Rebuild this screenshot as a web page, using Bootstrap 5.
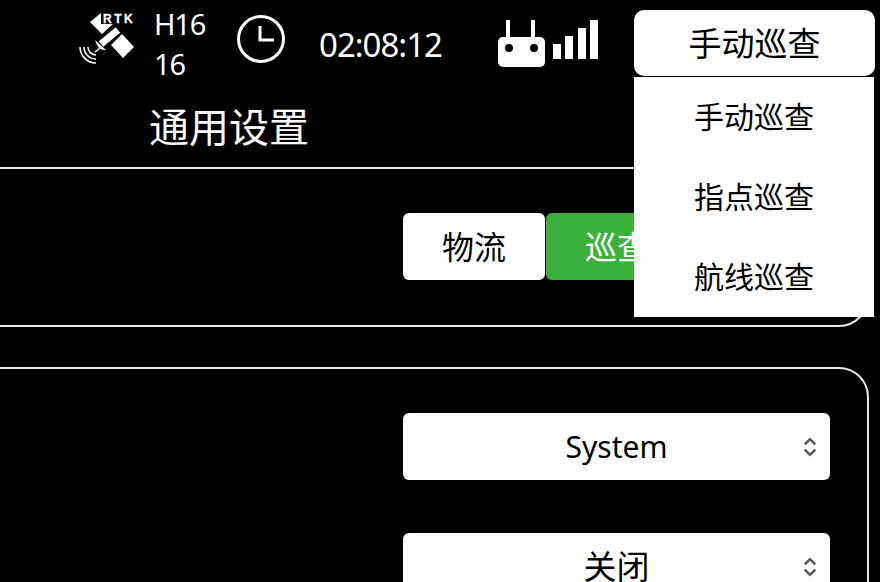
<!DOCTYPE html>
<html lang="zh-CN">
<head>
  <meta charset="UTF-8" />
  <meta name="viewport" content="width=device-width, initial-scale=1.0" />
  <title>通用设置</title>
  <link href="https://cdn.jsdelivr.net/npm/bootstrap@5.3.0/dist/css/bootstrap.min.css" rel="stylesheet" />
  <style>
    html, body {
      height: 100%;
      overflow: hidden;
    }
    body {
      background-color: #000;
      color: #fff;
      font-family: "Noto Sans", "Noto Sans CJK SC", sans-serif;
    }
    .top-strip {
      height: 86px;
      padding-left: 76px;
    }
    .rtk-icon { width: 64px; height: 64px; margin-bottom: 10px; }
    .rtk-label {
      font: bold 12px "Liberation Sans", sans-serif;
      letter-spacing: 2.5px;
    }
    .signal-text {
      width: 82px;
      margin: 2px 0 0 14px;
      font-size: 29px;
      line-height: 40px;
      letter-spacing: -1.2px;
    }
    .clock-icon { width: 50px; height: 50px; margin-bottom: 8px; }
    .time-text {
      width: 179px;
      margin: 4px 0 0 33px;
      font-size: 33px;
      letter-spacing: -1px;
    }
    .remote-icon { width: 48px; height: 50px; margin-top: 4px; }
    .bars-icon { width: 46px; height: 40px; margin: 0 35px 6px 7px; }
    .mode-drop { width: 241px; }
    .mode-btn {
      width: 100%;
      height: 66px;
      font-size: 33px;
      line-height: 1;
      color: #000;
      background: #fff;
      border: 0;
      border-radius: 10px;
    }
    .mode-btn:hover, .mode-btn:active { color: #000; background: #fff; }
    .mode-menu {
      width: 240px;
      min-width: 0;
      padding: 0;
      margin: 0;
      top: 67px;
      left: 0;
      border: 0;
      border-radius: 0;
    }
    .mode-menu .dropdown-item {
      height: 80px;
      line-height: 80px;
      padding: 0;
      font-size: 30px;
      text-align: center;
      color: #000;
    }
    .page-title {
      margin: 19px 0 18px 149px;
      font-size: 40px;
      line-height: 44px;
      font-weight: 400;
    }
    .set-box {
      margin-left: -40px;
      width: 909px;
      border: 2px solid #e8e8e8;
      border-radius: 30px;
      padding-left: 441px;
    }
    .box-one { height: 160px; padding-top: 44px; margin-bottom: 40px; }
    .box-two { height: 300px; padding-top: 44px; }
    .seg-btn {
      width: 142px;
      height: 67px;
      padding: 0;
      font-size: 32px;
      line-height: 1;
      color: #000;
      background: #fff;
      border: 0;
      border-radius: 6px;
    }
    .seg-on { background: #3bb13b; color: #fff; }
    .seg-group { gap: 1px; }
    .set-select {
      width: 427px;
      height: 67px;
      padding: 0 30px;
      margin-bottom: 53px;
      font-size: 30px;
      text-align: center;
      color: #000;
      border: 0;
      border-radius: 6px;
      background-position: right 13px center;
      background-size: 14px 20px;
      background-image: url("data:image/svg+xml,%3csvg xmlns='http://www.w3.org/2000/svg' viewBox='0 0 16 22'%3e%3cpath fill='none' stroke='%23555' stroke-width='2.8' d='M2 8l6-6 6 6M2 14l6 6 6-6'/%3e%3c/svg%3e");
    }
    .select-cjk { font-size: 33px; }
  </style>
</head>
<body>
  <div class="top-strip d-flex align-items-center">
    <svg class="rtk-icon flex-shrink-0" viewBox="0 0 64 64">
      <path fill="#fff" d="M14 16 25 7V18H37L26 28z"/>
      <path fill="#fff" d="M46 28 58 41 47 52 35 39z"/>
      <path fill="none" stroke="#fff" stroke-width="7" d="M42 24 25 38"/>
      <path fill="#fff" d="M19 34Q22 45 30 44z"/>
      <path fill="none" stroke="#fff" stroke-width="1.6" d="M24 42 19 46"/>
      <path fill="none" stroke="#fff" stroke-width="1.6" d="M12 41A8 8 0 0 0 20 49M8 41A12 12 0 0 0 20 53M4 41A16 16 0 0 0 20 57"/>
      <text class="rtk-label" x="27" y="17" fill="#fff" stroke="#fff" stroke-width=".3">RTK</text>
    </svg>
    <div class="signal-text">H16<br />16</div>
    <svg class="clock-icon" viewBox="0 0 50 50">
      <circle cx="25" cy="25" r="22.5" fill="none" stroke="#fff" stroke-width="3" />
      <path d="M24 12v14h14" fill="none" stroke="#fff" stroke-width="3" />
    </svg>
    <div class="time-text">02:08:12</div>
    <svg class="remote-icon" viewBox="0 0 48 50">
      <rect x="0" y="17" width="47" height="30" rx="5" fill="#fff" />
      <path d="M10 0v18M35 0v18" stroke="#fff" stroke-width="4" />
      <circle cx="11" cy="28" r="4" fill="#000" />
      <circle cx="36" cy="28" r="4" fill="#000" />
    </svg>
    <svg class="bars-icon" viewBox="0 0 46 40">
      <rect x="0" y="24" width="8" height="15" fill="#fff" />
      <rect x="12" y="16" width="8" height="23" fill="#fff" />
      <rect x="25" y="8" width="8" height="31" fill="#fff" />
      <rect x="37" y="0" width="8" height="39" fill="#fff" />
    </svg>
    <div class="dropdown mode-drop">
      <button class="btn mode-btn" type="button" data-bs-toggle="dropdown">手动巡查</button>
      <ul class="dropdown-menu show mode-menu">
        <li><a class="dropdown-item" href="#">手动巡查</a></li>
        <li><a class="dropdown-item" href="#">指点巡查</a></li>
        <li><a class="dropdown-item" href="#">航线巡查</a></li>
      </ul>
    </div>
  </div>
  <h1 class="page-title">通用设置</h1>
  <div class="set-box box-one">
    <div class="d-flex seg-group">
      <button class="btn seg-btn" type="button">物流</button>
      <button class="btn seg-btn seg-on" type="button">巡查</button>
    </div>
  </div>
  <div class="set-box box-two">
    <select class="form-select set-select"><option>System</option></select>
    <select class="form-select set-select select-cjk"><option>关闭</option></select>
  </div>
  <script src="https://cdn.jsdelivr.net/npm/bootstrap@5.3.0/dist/js/bootstrap.bundle.min.js"></script>
</body>
</html>
